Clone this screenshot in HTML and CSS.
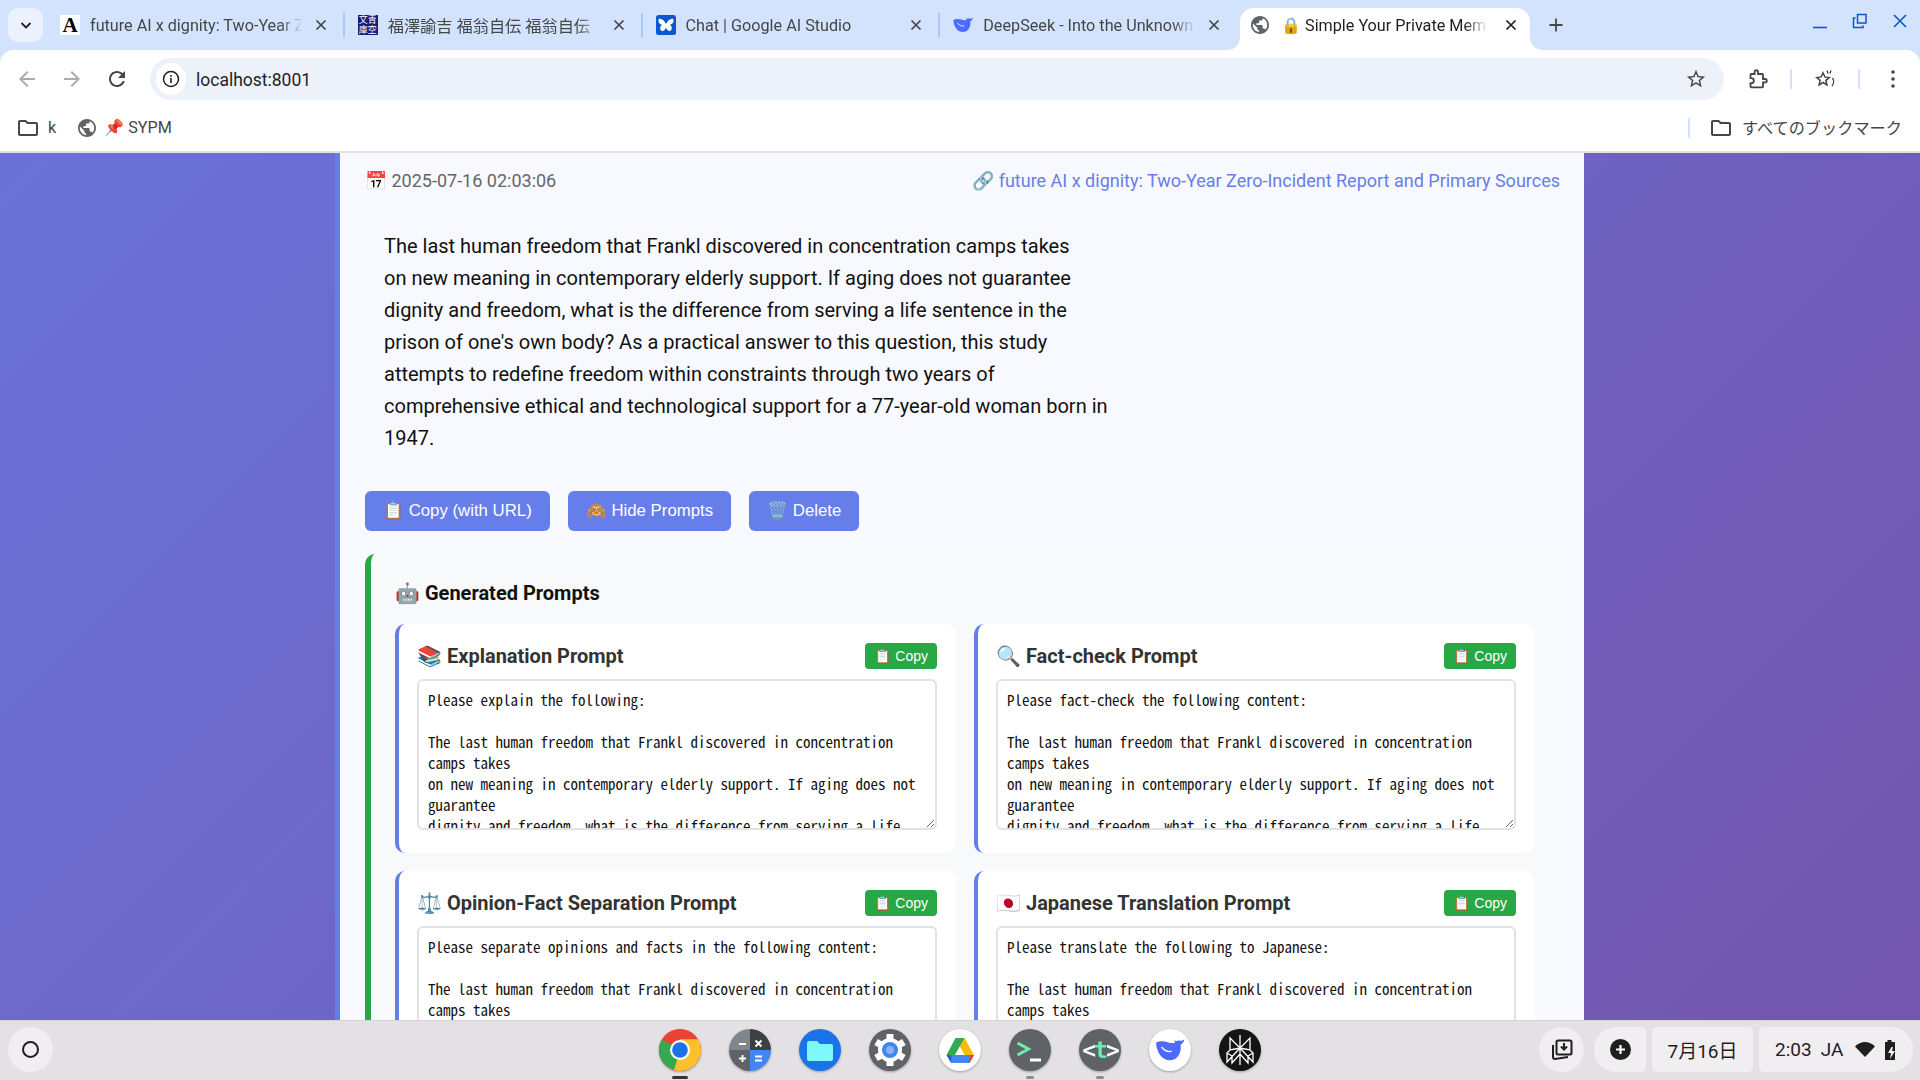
FILE: index.html
```html
<!DOCTYPE html>
<html lang="en">
<head>
  <meta charset="UTF-8">
  <title>Simple Your Private Memo</title>
  <link rel="stylesheet" href="styles.css">
</head>
<body>
  <svg class="defs" width="0" height="0">
    <symbol id="i-close" viewBox="0 0 16 16"><path d="M3.5 3.5l9 9M12.5 3.5l-9 9" fill="none" stroke="currentColor" stroke-width="1.7"/></symbol>
    <symbol id="i-globe" viewBox="2 2 20 20"><path fill="currentColor" d="M12 2C6.48 2 2 6.48 2 12s4.48 10 10 10 10-4.48 10-10S17.52 2 12 2zm-1 17.93c-3.95-.49-7-3.85-7-7.93 0-.62.08-1.21.21-1.79L9 15v1c0 1.1.9 2 2 2v1.93zm6.9-2.54c-.26-.81-1-1.39-1.9-1.39h-1v-3c0-.55-.45-1-1-1H8v-2h2c.55 0 1-.45 1-1V7h2c1.1 0 2-.9 2-2v-.41c2.93 1.19 5 4.06 5 7.41 0 2.08-.8 3.97-2.1 5.39z"/></symbol>
    <symbol id="i-folder" viewBox="2 4 20 16"><path fill="currentColor" d="M9.17 6l2 2H20v10H4V6h5.17M10 4H4c-1.1 0-1.99.9-1.99 2L2 18c0 1.1.9 2 2 2h16c1.1 0 2-.9 2-2V8c0-1.1-.9-2-2-2h-8l-2-2z"/></symbol>
    <symbol id="i-whale" viewBox="0 0 24 18"><path fill="currentColor" d="M.5 3C3 1.500 7 1.500 10 2.500C12 3.200 14.500 3.500 16 3C16.500 2.500 16 2 15 1C17 1.800 18.500 1.800 19.500 1C20.500 1.800 22 1.500 24 0C23.500 2.500 22 4 20.800 4.500C21.500 10 19.500 14 16 16.500C12 18.500 7 17.500 4 13.500C1.500 10 .5 6 .5 3z"/><path d="M5 6.500C7.500 9.500 10.500 11 13.500 10" fill="none" stroke="#fff" stroke-width="1.100"/></symbol>
  </svg>

  <div class="chrome">
    <div class="tabstrip">
      <button class="tab-search">
        <svg width="14" height="14" viewBox="0 0 14 14"><path d="M2.500 5l4.500 4.500L11.500 5" fill="none" stroke="#1f1f1f" stroke-width="1.800"/></svg>
      </button>
      <div class="tab">
        <span class="favicon fav-a">A</span>
        <span class="tab-title">future AI x dignity: Two-Year Zero-Incident Report</span>
        <svg class="tab-close"><use href="#i-close"/></svg>
        <span class="tab-sep"></span>
      </div>
      <div class="tab">
        <span class="favicon fav-aozora">文青<br>庫空</span>
        <span class="tab-title">福澤諭吉 福翁自伝 福翁自伝</span>
        <svg class="tab-close"><use href="#i-close"/></svg>
        <span class="tab-sep"></span>
      </div>
      <div class="tab">
        <svg class="favicon" viewBox="0 0 20 20"><rect width="20" height="20" rx="2.500" fill="#0b57d0"/><path fill="#fff" d="M2.800 4c2.600-.800 5.800 1.800 7.200 5 1.400-3.200 4.600-5.800 7.200-5 .9 2.800-.4 5.300-3.500 5.900 2.300.5 2.700 3.600 1.200 5.500-1.700 1.600-4-.2-4.900-3-.9 2.800-3.200 4.600-4.900 3-1.500-1.900-1.100-5 1.200-5.500C3.200 9.300 1.900 6.800 2.800 4z"/></svg>
        <span class="tab-title">Chat | Google AI Studio</span>
        <svg class="tab-close"><use href="#i-close"/></svg>
        <span class="tab-sep"></span>
      </div>
      <div class="tab">
        <svg class="favicon whale"><use href="#i-whale"/></svg>
        <span class="tab-title">DeepSeek - Into the Unknown</span>
        <svg class="tab-close"><use href="#i-close"/></svg>
      </div>
      <div class="tab tab-active">
        <svg class="favicon globe"><use href="#i-globe"/></svg>
        <span class="tab-title"><span class="lock">🔒</span> Simple Your Private Memo</span>
        <svg class="tab-close"><use href="#i-close"/></svg>
      </div>
      <svg class="new-tab" width="16" height="16" viewBox="0 0 16 16"><path d="M8 1.500v13M1.500 8h13" stroke="#444746" stroke-width="1.800"/></svg>
      <div class="win-controls">
        <svg width="16" height="16" viewBox="0 0 16 16"><path d="M1 14.500h14" stroke="#0b57d0" stroke-width="1.600"/></svg>
        <svg width="16" height="16" viewBox="0 0 16 16"><path d="M5.500 1.500h8.500v8.500H5.500zM3.500 5H1.500v9.500H11V12.500" fill="none" stroke="#0b57d0" stroke-width="1.500"/></svg>
        <svg width="16" height="16" viewBox="0 0 16 16"><path d="M2 2l12 12M14 2L2 14" stroke="#0b57d0" stroke-width="1.600"/></svg>
      </div>
    </div>

    <div class="toolbar">
      <svg class="nav-icon dim" viewBox="0 0 24 24"><path d="M20 11H7.830l5.590-5.590L12 4l-8 8 8 8 1.410-1.410L7.830 13H20v-2z"/></svg>
      <svg class="nav-icon dim" viewBox="0 0 24 24"><path d="M4 11h12.170l-5.590-5.590L12 4l8 8-8 8-1.410-1.410L16.170 13H4v-2z"/></svg>
      <svg class="nav-icon" viewBox="0 0 24 24"><path d="M17.650 6.350C16.200 4.900 14.210 4 12 4c-4.420 0-7.990 3.580-7.990 8s3.570 8 7.990 8c3.730 0 6.840-2.550 7.730-6h-2.080c-.82 2.330-3.040 4-5.650 4-3.310 0-6-2.690-6-6s2.690-6 6-6c1.660 0 3.140.69 4.220 1.780L13 11h7V4l-2.350 2.350z"/></svg>
      <div class="omnibox">
        <span class="site-info">
          <svg width="18" height="18" viewBox="0 0 18 18"><circle cx="9" cy="9" r="7.500" fill="none" stroke="#1f1f1f" stroke-width="1.500"/><path d="M9 8v5M9 5v1.800" stroke="#1f1f1f" stroke-width="1.600"/></svg>
        </span>
        <span class="url">localhost:8001</span>
        <svg class="star" viewBox="0 0 24 24"><path d="M22 9.240l-7.190-.62L12 2 9.190 8.630 2 9.240l5.460 4.730L5.820 21 12 17.270 18.180 21l-1.630-7.030L22 9.240zM12 15.400l-3.760 2.270 1-4.280-3.320-2.880 4.380-.38L12 6.100l1.710 4.040 4.380.38-3.320 2.880 1 4.280L12 15.400z"/></svg>
      </div>
      <svg class="puzzle" width="20" height="22" viewBox="0 0 24 24"><path fill="none" stroke="#444746" stroke-width="2.200" d="M20.500 12H18V7c0-.6-.4-1-1-1h-5V3.500a2 2 0 0 0-4 0V6H4c-.6 0-1 .4-1 1v4h1a3 3 0 0 1 0 6H3v4c0 .6.4 1 1 1h13c.6 0 1-.4 1-1v-5h2.500a2 2 0 0 0 0-4z"/></svg>
      <span class="bar-sep"></span>
      <svg class="sparkle" width="24" height="22" viewBox="0 0 24 22"><path fill="#444746" d="M18 9l-5.500-.5L10 3 7.500 8.500 2 9l4.200 3.800L5 18.500l5-3 5 3-1.200-5.700L18 9zM10 13.500l-2.800 1.700.7-3.200-2.400-2.100 3.200-.3L10 6.600l1.300 3 3.200.3-2.400 2.100.7 3.200L10 13.500z"/><path d="M14 2.500l1 3M18 2.500l-1.200 3M19.500 10c1.500 2 1.500 5.500-.5 8" fill="none" stroke="#444746" stroke-width="1.400"/></svg>
      <span class="bar-sep sep2"></span>
      <svg class="menu" width="4" height="18" viewBox="0 0 4 18"><circle cx="2" cy="2" r="1.800" fill="#444746"/><circle cx="2" cy="9" r="1.800" fill="#444746"/><circle cx="2" cy="16" r="1.800" fill="#444746"/></svg>
    </div>

    <div class="bookmarks">
      <svg class="bm-folder"><use href="#i-folder"/></svg>
      <span class="bm-label">k</span>
      <svg class="bm-globe"><use href="#i-globe"/></svg>
      <span class="bm-label bm-pin"><span class="pin">📌</span> SYPM</span>
      <span class="bm-sep"></span>
      <svg class="bm-folder"><use href="#i-folder"/></svg>
      <span class="bm-label bm-all">すべてのブックマーク</span>
    </div>
  </div>

  <main class="page">
    <div class="panel">
      <div class="meta">
        <span class="date">📅 2025-07-16 02:03:06</span>
        <a class="source" href="#">🔗 future AI x dignity: Two-Year Zero-Incident Report and Primary Sources</a>
      </div>
      <p class="memo">The last human freedom that Frankl discovered in concentration camps takes<br>on new meaning in contemporary elderly support. If aging does not guarantee<br>dignity and freedom, what is the difference from serving a life sentence in the<br>prison of one's own body? As a practical answer to this question, this study<br>attempts to redefine freedom within constraints through two years of<br>comprehensive ethical and technological support for a 77-year-old woman born in<br>1947.</p>
      <div class="actions">
        <button class="btn">📋 Copy (with URL)</button>
        <button class="btn">🙈 Hide Prompts</button>
        <button class="btn">🗑️ Delete</button>
      </div>
      <section class="prompts">
        <h3 class="prompts-title">🤖 Generated Prompts</h3>
        <div class="prompt-grid">
          <div class="prompt-card">
            <div class="prompt-head">
              <h4>📚 Explanation Prompt</h4>
              <button class="copy-btn">📋 Copy</button>
            </div>
            <textarea class="prompt-text" readonly>Please explain the following:

The last human freedom that Frankl discovered in concentration camps takes
on new meaning in contemporary elderly support. If aging does not guarantee
dignity and freedom, what is the difference from serving a life sentence in the</textarea>
          </div>
          <div class="prompt-card">
            <div class="prompt-head">
              <h4>🔍 Fact-check Prompt</h4>
              <button class="copy-btn">📋 Copy</button>
            </div>
            <textarea class="prompt-text" readonly>Please fact-check the following content:

The last human freedom that Frankl discovered in concentration camps takes
on new meaning in contemporary elderly support. If aging does not guarantee
dignity and freedom, what is the difference from serving a life sentence in the</textarea>
          </div>
          <div class="prompt-card">
            <div class="prompt-head">
              <h4>⚖️ Opinion-Fact Separation Prompt</h4>
              <button class="copy-btn">📋 Copy</button>
            </div>
            <textarea class="prompt-text" readonly>Please separate opinions and facts in the following content:

The last human freedom that Frankl discovered in concentration camps takes
on new meaning in contemporary elderly support. If aging does not guarantee
dignity and freedom, what is the difference from serving a life sentence in the</textarea>
          </div>
          <div class="prompt-card">
            <div class="prompt-head">
              <h4>🇯🇵 Japanese Translation Prompt</h4>
              <button class="copy-btn">📋 Copy</button>
            </div>
            <textarea class="prompt-text" readonly>Please translate the following to Japanese:

The last human freedom that Frankl discovered in concentration camps takes
on new meaning in contemporary elderly support. If aging does not guarantee
dignity and freedom, what is the difference from serving a life sentence in the</textarea>
          </div>
        </div>
      </section>
    </div>
  </main>

  <footer class="shelf">
    <span class="launcher"><span class="launcher-ring"></span></span>
    <div class="dock">
      <span class="app">
        <svg viewBox="0 0 42 42"><circle cx="21" cy="21" r="21" fill="#ea4335"/><path d="M21 21L2.800 10.500A21 21 0 0 0 15 41.100z" fill="#34a853"/><path d="M21 21l-6 20.100A21 21 0 0 0 39.200 10.500L21 10.500z" fill="#fbc02d"/><path d="M21 10.500h18.200l2 5H25z" fill="#fbc02d"/><circle cx="21" cy="21" r="10" fill="#fff"/><circle cx="21" cy="21" r="7.800" fill="#1a73e8"/></svg>
        <i class="run run-main"></i>
      </span>
      <span class="app">
        <svg viewBox="0 0 42 42"><clipPath id="c-calc"><circle cx="21" cy="21" r="21"/></clipPath><g clip-path="url(#c-calc)"><rect width="21" height="21" fill="#80868b"/><rect x="21" width="21" height="21" fill="#3c4043"/><rect y="21" width="21" height="21" fill="#5f6368"/><rect x="21" y="21" width="21" height="21" fill="#4285f4"/></g><path d="M10 15h7M26.500 11.500l6 6M32.500 11.500l-6 6M13.500 26v7M10 29.500h7M26 27.500h7M26 31.500h7" stroke="#fff" stroke-width="1.900"/></svg>
      </span>
      <span class="app">
        <svg viewBox="0 0 42 42"><circle cx="21" cy="21" r="21" fill="#1a73e8"/><path d="M10 12h8l3 3h11a2 2 0 0 1 2 2v13a2 2 0 0 1-2 2H10a2 2 0 0 1-2-2V14a2 2 0 0 1 2-2z" fill="#7ef9f9"/></svg>
      </span>
      <span class="app">
        <svg viewBox="0 0 42 42"><circle cx="21" cy="21" r="21" fill="#5f6368"/><path d="M21 5v8M21 29v8M7.100 13l6.900 4M28 25l6.900 4M7.100 29l6.900-4M28 17l6.900-4" stroke="#fff" stroke-width="7"/><circle cx="21" cy="21" r="12" fill="#fff"/><circle cx="21" cy="21" r="8" fill="#4285f4"/><circle cx="21" cy="21" r="4" fill="#8ab4f8"/></svg>
      </span>
      <span class="app">
        <svg viewBox="0 0 42 42"><circle cx="21" cy="21" r="21" fill="#fff"/><path d="M16.500 9h9L35 26h-9.500z" fill="#fbbc04"/><path d="M16.500 9h9L12.500 32 7.500 26z" fill="#34a853"/><path d="M12.500 26H35l-4.500 8H12z" fill="#4285f4"/><path d="M7.500 26h5l-.5 8z" fill="#1967d2"/><path d="M30 26h5l-4.500 8z" fill="#ea4335"/></svg>
      </span>
      <span class="app">
        <svg viewBox="0 0 42 42"><circle cx="21" cy="21" r="21" fill="#5f6368"/><path d="M8.500 14l11 6-11 6" fill="none" stroke="#69f0ae" stroke-width="3"/><path d="M21 31h11" stroke="#fff" stroke-width="3"/></svg>
        <i class="run"></i>
      </span>
      <span class="app">
        <svg viewBox="0 0 42 42"><circle cx="21" cy="21" r="21" fill="#5f6368"/><text x="21" y="29" text-anchor="middle" class="dock-text"><tspan fill="#fff">&lt;</tspan><tspan fill="#69f0ae">t</tspan><tspan fill="#fff">&gt;</tspan></text></svg>
        <i class="run"></i>
      </span>
      <span class="app">
        <svg viewBox="0 0 42 42"><circle cx="21" cy="21" r="21" fill="#fff"/><use href="#i-whale" x="6.500" y="10" width="29" height="22" color="#4d6bfe"/></svg>
      </span>
      <span class="app">
        <svg viewBox="0 0 42 42"><circle cx="21" cy="21" r="21" fill="#141414"/><path d="M21 6v30M11 9l10 10 10-10v12l-10-2-10 2zM11 9v12l-3 3v9l13-14 13 14v-9l-3-3M8 24l5 3v7l8-9 8 9v-7l5-3" fill="none" stroke="#fff" stroke-width="1.300"/></svg>
      </span>
    </div>
    <div class="tray">
      <span class="tray-btn tray-round">
        <svg width="24" height="24" viewBox="0 0 24 24"><rect x="6.500" y="2.500" width="15" height="14" rx="1.500" fill="none" stroke="#1f1f1f" stroke-width="2"/><path d="M14 5v5M11 8.500l3 3 3-3" fill="none" stroke="#1f1f1f" stroke-width="2"/><path d="M3 7v12c0 1 1 2 2 2l13-2" fill="none" stroke="#1f1f1f" stroke-width="2"/></svg>
      </span>
      <span class="tray-btn tray-add">
        <svg width="21" height="21" viewBox="0 0 21 21"><circle cx="10.500" cy="10.500" r="10.500" fill="#1f1f1f"/><path d="M10.500 6v9M6 10.500h9" stroke="#fff" stroke-width="2.200"/></svg>
      </span>
      <span class="tray-btn tray-date">7月16日</span>
      <span class="tray-btn tray-status">
        <span>2:03</span><span>JA</span>
        <svg class="wifi" width="20" height="15" viewBox="0 0 20 15"><path d="M10 15L0 4.500C5.500-1.500 14.500-1.500 20 4.500z" fill="#1f1f1f"/></svg>
        <svg width="12" height="20" viewBox="0 0 12 20"><path d="M3.500 0h4v2H11v18H1V2h2.500z" fill="#1f1f1f"/><path d="M7.500 7L4 13h3l-1 6 5-8H8l1-4z" fill="#f0eef0"/></svg>
      </span>
    </div>
  </footer>
</body>
</html>
```

FILE: styles.css
```css
* { box-sizing: border-box; }
html, body { margin: 0; height: 100%; }
body { width: 1920px; height: 1080px; overflow: hidden; display: flex; flex-direction: column; font-family: Roboto, "Noto Sans CJK JP", sans-serif; color: #1f1f1f; background: #e3e1e3; }
.defs { position: absolute; }
button { font-family: "Liberation Sans", Arial, sans-serif; border: 0; }

/* browser chrome */
.chrome { background: #d3e3fd; flex: none; }
.tabstrip { height: 50px; display: flex; align-items: flex-end; padding-left: 8px; position: relative; }
.tab-search { width: 35px; height: 34px; margin: 0 6px 8px 0; background: #ecf2fd; border-radius: 10px; padding: 0; display: flex; align-items: center; justify-content: center; }
.tab { width: 297.750px; height: 42px; padding: 0 2px 8px 11px; display: flex; align-items: center; flex: none; color: #444746; position: relative; }
.favicon { width: 20px; height: 20px; flex: none; }
.fav-a { background: #fff; color: #000; font: bold 21px/20px "Liberation Serif", serif; text-align: center; }
.fav-aozora { background: #1a1a7a; color: #fff; font: 9px/10px "Noto Sans CJK JP", sans-serif; text-align: center; overflow: hidden; }
.whale { color: #4d6bfe; height: 16px; }
.globe { color: #5f6368; width: 18px; height: 18px; }
.tab-title { flex: 1; min-width: 0; margin-left: 10px; font-size: 16.200px; white-space: nowrap; overflow: hidden; -webkit-mask-image: linear-gradient(to left, transparent 0, #000 24px); mask-image: linear-gradient(to left, transparent 0, #000 24px); }
.tab-close { width: 16px; height: 16px; margin: 0 14px 0 10px; flex: none; color: #444746; }
.tab-sep { width: 2px; height: 24px; background: #a8c7fa; flex: none; }
.tab .tab-close:last-child { margin-right: 16px; }
.tab-active { width: 290px; background: #fff; border-radius: 14px 14px 0 0; color: #1f1f1f; }
.tab-active .tab-close, .tab-active .tab-close:last-child { color: #1f1f1f; margin-right: 9px; margin-left: 15px; }
.tab-active .tab-title { margin-left: 12px; }
.tab-active::before, .tab-active::after { content: ""; position: absolute; bottom: 0; width: 12px; height: 12px; }
.tab-active::before { left: -12px; background: radial-gradient(circle at 0 0, #d3e3fd 11.500px, #fff 12px); }
.tab-active::after { right: -12px; background: radial-gradient(circle at 100% 0, #d3e3fd 11.500px, #fff 12px); }
.lock { font-size: 16px; }
.new-tab { margin: 0 0 17px 18px; flex: none; }
.win-controls { margin-left: auto; align-self: flex-start; display: flex; gap: 24px; padding: 13px 12px 0 0; }

.toolbar { height: 58px; background: #fff; border-radius: 14px 14px 0 0; display: flex; align-items: flex-start; padding: 8px 0 0 15px; position: relative; }
.nav-icon { width: 24px; height: 24px; fill: #444746; margin: 9px 21px 0 0; flex: none; }
.nav-icon.dim { fill: #a9acaf; }
.omnibox { width: 1574px; height: 42px; background: #ecf1fa; border-radius: 21px; display: flex; align-items: center; padding: 0 17px 0 6px; flex: none; }
.site-info { width: 30px; height: 32px; background: #fff; border-radius: 16px; display: flex; align-items: center; justify-content: center; }
.url { margin-left: 10px; padding-top: 1px; font-size: 17.500px; color: #1f1f1f; }
.star { width: 22px; height: 22px; fill: #444746; margin-left: auto; }
.puzzle { margin: 10px 0 0 24px; flex: none; }
.bar-sep { width: 2px; height: 20px; background: #d3e3fd; margin: 11px 0 0 22px; flex: none; }
.sep2 { margin-left: 21px; }
.sparkle { margin: 10px 0 0 21px; flex: none; }
.menu { margin: 12px 0 0 31px; flex: none; }

.bookmarks { height: 45px; background: #fff; border-bottom: 2px solid #e3e3de; display: flex; align-items: center; padding: 0 18px 4px; font-size: 16.200px; color: #444746; }
.bm-folder { width: 20px; height: 16px; color: #444746; flex: none; }
.bm-globe { width: 18px; height: 18px; color: #5f6368; margin-left: 22px; flex: none; }
.bm-label { margin-left: 10px; white-space: nowrap; }
.bm-pin { margin-left: 8px; }
.pin { font-size: 16px; }
.bm-sep { width: 2px; height: 20px; background: #d3e3fd; margin-left: auto; margin-right: 21px; }
.bm-all { margin: 0 0 2px 11px; font-size: 16.200px; }

/* the page */
.page { flex: 1; min-height: 0; overflow: hidden; background: linear-gradient(135deg, #6a72d8 0%, #7356ae 100%); display: flex; }
.panel { width: 1249px; margin-left: 335px; background: #f8f9fe; border-left: 5px solid #667eea; padding: 0 25px; flex: none; }
.meta { display: flex; justify-content: space-between; align-items: center; height: 54px; font-size: 18px; }
.date { color: #666; }
.source { color: #667eea; text-decoration: none; margin-right: -1px; }
.memo { margin: 13px 0 27px; padding: 10px 19px; font-size: 20px; line-height: 32px; color: #111; }
.actions { display: flex; gap: 18px; }
.btn { height: 40px; padding: 0 18px 1px; background: #667eea; color: #fff; border-radius: 6px; font-size: 16.800px; }

.prompts { width: 1193px; margin-top: 23px; background: #f8f9fa; border-left: 6px solid #28a745; border-radius: 10px 10px 0 0; padding: 27px 23px 25px 24px; }
.prompts-title { margin: 0 0 19px; font-size: 20px; line-height: 24px; color: #111; }
.prompt-grid { display: grid; grid-template-columns: 561px 561px; gap: 18px; }
.prompt-card { height: 229px; background: #fff; border-left: 4px solid #667eea; border-radius: 10px; padding: 19px 19px 0 18px; }
.prompt-head { display: flex; justify-content: space-between; align-items: center; height: 26px; margin-bottom: 10px; }
.prompt-head h4 { margin: 0; font-size: 20px; color: #333; }
.copy-btn { height: 26px; padding: 0 9px; background: #28a745; color: #fff; border-radius: 4px; font-size: 14px; }
.prompt-text { display: block; width: 100%; height: 151px; padding: 8px 9px; border: 2px solid #e2e2e2; border-radius: 6px; font-family: "Noto Sans Mono CJK JP", "DejaVu Sans Mono", monospace; font-size: 15px; line-height: 21px; color: #111; background: #fff; overflow: hidden; resize: vertical; outline: 0; }

/* shelf */
.shelf { height: 60px; flex: none; background: #e3e1e3; border-top: 1px solid #d5d3d5; display: flex; align-items: center; padding: 0 7px 2px 8px; position: relative; }
.launcher { width: 45px; height: 45px; background: #f0eef0; border-radius: 50%; display: flex; align-items: center; justify-content: center; flex: none; }
.launcher-ring { width: 17px; height: 17px; border: 2px solid #1f1f1f; border-radius: 50%; }
.dock { display: flex; gap: 28px; margin-left: 606px; }
.app { width: 42px; height: 42px; position: relative; display: block; }
.app svg { display: block; width: 42px; height: 42px; filter: drop-shadow(0 1px 1px rgba(0,0,0,.3)); }
.run { position: absolute; left: 17px; top: 47px; width: 8px; height: 3px; border-radius: 2px; background: #8b8d8f; }
.run-main { left: 13px; width: 16px; background: #333; }
.dock-text { font: bold 23px "DejaVu Sans Mono", monospace; letter-spacing: -2px; }
.tray { margin-left: auto; display: flex; gap: 6px; }
.tray-btn { height: 45px; background: #f0eef0; display: flex; align-items: center; justify-content: center; border-radius: 5px; font-size: 19px; }
.tray-round { width: 45px; border-radius: 50%; margin-right: 4px; }
.tray-add { width: 52px; border-radius: 22px 5px 5px 22px; }
.tray-date { width: 101px; }
.tray-status { width: 154px; border-radius: 5px 22px 22px 5px; gap: 9px; justify-content: flex-start; padding-left: 16px; }
.wifi { margin-left: 3px; }
```
